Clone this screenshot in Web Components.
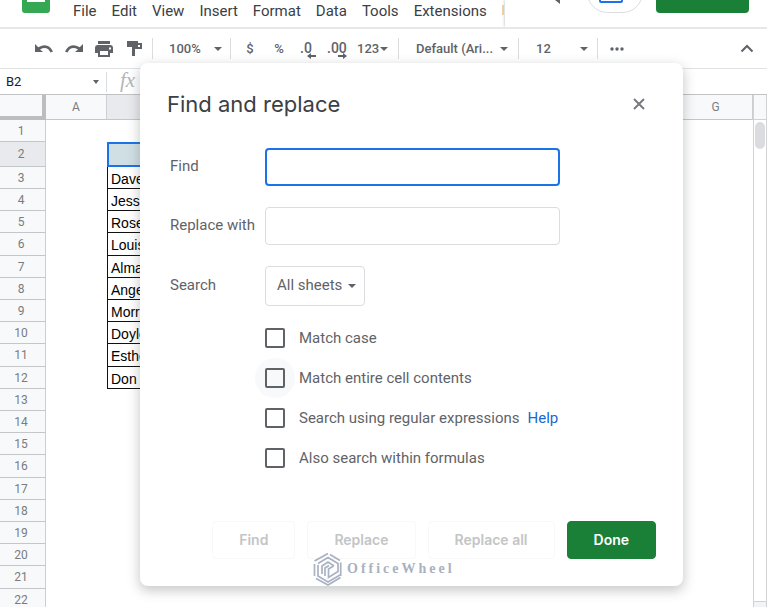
<!DOCTYPE html>
<html lang="en">
<head>
<meta charset="utf-8">
<title>Find and replace</title>
<style>
html,body{height:100%}
body{margin:0;background:#fff;color:#3c4043;font-family:Roboto,"Liberation Sans",sans-serif;font-size:15px;line-height:20px;overflow:hidden}
</style>
</head>
<body>
<sheet-app>
  <menu-bar slot="menu"></menu-bar>
  <tool-bar slot="tools"></tool-bar>
  <formula-bar slot="formula"></formula-bar>
  <sheet-grid slot="grid"></sheet-grid>
  <find-dialog slot="dialog" heading="Find and replace">
    <field-row label="Find" active></field-row>
    <field-row label="Replace with"></field-row>
    <search-scope label="Search">All sheets</search-scope>
    <check-option>Match case</check-option>
    <check-option hovered>Match entire cell contents</check-option>
    <check-option help>Search using regular expressions</check-option>
    <check-option>Also search within formulas</check-option>
    <dialog-button slot="actions" disabled>Find</dialog-button>
    <dialog-button slot="actions" disabled>Replace</dialog-button>
    <dialog-button slot="actions" disabled>Replace all</dialog-button>
    <dialog-button slot="actions" primary>Done</dialog-button>
    <brand-mark slot="mark">OfficeWheel</brand-mark>
  </find-dialog>
</sheet-app>
<script>
const define = (name, html, setup) => customElements.define(name, class extends HTMLElement {
  constructor() {
    super();
    this.attachShadow({ mode: "open" }).innerHTML = html;
  }
  connectedCallback() { if (setup) setup(this, this.shadowRoot); }
});

define("sheet-app", `
<style>
:host{display:flex;flex-direction:column;position:relative;height:100%;overflow:hidden}
.grid{flex:1;min-height:0;display:flex}
.grid ::slotted(*){flex:1}
.over{position:absolute;inset:0;padding:63px 84px 0 140px}
</style>
<slot name="menu"></slot><slot name="tools"></slot><slot name="formula"></slot>
<div class="grid"><slot name="grid"></slot></div>
<div class="over"><slot name="dialog"></slot></div>`);

define("menu-bar", `
<style>
:host{display:flex;height:27px;border-bottom:2px solid #e6e7e8;flex:none;overflow:hidden}
.logo{width:28px;margin-left:22px;flex:none}
nav{display:flex;gap:15px;padding:1px 0 0 23px;flex:1;overflow:hidden}
a{color:#3c4043;text-decoration:none;white-space:nowrap}
.edge{width:2px;height:10px;margin-top:4px;background:#f6d2a6}
.side{display:flex;align-items:flex-start;justify-content:flex-end;width:262px;flex:none;background:#fff;box-shadow:0 0 3px #b0b4b8}
button{font:inherit;padding:0;background:#fff;border:0;display:block}
.chat{width:12px;height:5px;margin-right:23px}
.meet{box-sizing:border-box;width:56px;height:13px;overflow:hidden;margin-right:13px}
.share{width:93px;height:13px;background:#1a8038;border-radius:0 0 4px 4px;margin-right:18px}
svg{display:block;margin:0 auto}
</style>
<svg class="logo" width="28" height="13"><path d="M0 0h28v10a3 3 0 0 1-3 3H3a3 3 0 0 1-3-3z" fill="#34a853"/><path d="M5 0h18v2H5z" fill="#fff"/></svg>
<nav><a href="#">File</a><a href="#">Edit</a><a href="#">View</a><a href="#">Insert</a><a href="#">Format</a><a href="#">Data</a><a href="#">Tools</a><a href="#">Extensions</a><span class="edge"></span></nav>
<div class="side">
<button class="chat" aria-label="Comments"><svg width="12" height="5"><path d="M3 0h5v4z" fill="#5f6368"/></svg></button>
<button class="meet" aria-label="Meet"><svg width="56" height="13"><rect x=".5" y="-27.500" width="55" height="40" rx="20" fill="none" stroke="#dadce0"/><path d="M13 0v1q0 1 1 1h20q1 0 1-1V0" fill="none" stroke="#1a73e8" stroke-width="2"/></svg></button>
<button class="share" aria-label="Share"></button>
</div>`);

define("tool-bar", `
<style>
:host{display:flex;align-items:center;height:39px;flex:none;border-bottom:1px solid #e0e2e4;background:#fff;color:#5f6368;font-size:13px;font-weight:500;padding:0 12px 0 29px}
button{font:inherit;color:inherit;background:none;border:0;padding:0;display:flex;align-items:center;justify-content:center;flex:none;height:26px;white-space:nowrap}
.ic{width:30px}
.hr{width:1px;height:21px;background:#dadce0;flex:none}
.ic + .hr{margin-left:3px}
.drop{justify-content:space-between}
.sp{flex:1}
</style>
<button class="ic" aria-label="Undo"><svg width="18" height="10" viewBox="0 0 18 10"><path d="M0 0v8h8L5 5.500Q12 1.500 15.500 8.500L18 7.500Q13-2.500 3.300 3.200z" fill="#5f6368"/></svg></button>
<button class="ic" aria-label="Redo"><svg width="18" height="10" viewBox="0 0 18 10"><path d="M18 0v8h-8l3-2.500Q6 1.500 2.500 8.500L0 7.500Q5-2.500 14.700 3.200z" fill="#5f6368"/></svg></button>
<button class="ic" aria-label="Print"><svg width="18" height="16" viewBox="0 0 18 16"><path d="M3 0h12v3H3zM3 4h12q3 0 3 3v5h-3v4H3v-4H0V7q0-3 3-3zm2 6v4h8v-4zm9-3.500v2h2v-2z" fill="#5f6368" fill-rule="evenodd"/></svg></button>
<button class="ic" aria-label="Paint format"><svg width="16" height="16" viewBox="0 0 16 16"><path d="M1 0h11v2h4v6H9v7H6V6h8V4h-2v2H1z" fill="#5f6368"/></svg></button>
<span class="hr"></span>
<button class="drop" style="width:53px;margin:0 8px 0 16px">100% <svg width="8" height="4"><path d="M0 0h8L4 4z" fill="#5f6368"/></svg></button>
<span class="hr"></span>
<button style="width:38px">$</button>
<button style="width:20px">%</button>
<button style="width:38px" aria-label="Decrease decimals"><svg width="18" height="20" viewBox="0 0 18 20"><text x="1" y="14" font-size="14" fill="#5f6368">.0</text><path d="M17 16v2h-5v2l-4-3 4-3v2z" fill="#5f6368"/></svg></button>
<button style="width:20px" aria-label="Increase decimals"><svg width="20" height="20" viewBox="0 0 20 20"><text x="0" y="14" font-size="14" fill="#5f6368">.00</text><path d="M11 16v2h5v2l4-3-4-3v2z" fill="#5f6368"/></svg></button>
<button class="drop" style="width:31px;margin:0 10px 0 10px">123<svg width="8" height="4"><path d="M0 0h8L4 4z" fill="#5f6368"/></svg></button>
<span class="hr"></span>
<button class="drop" style="width:92px;margin:0 10px 0 17px">Default (Ari...<svg width="8" height="4"><path d="M0 0h8L4 4z" fill="#5f6368"/></svg></button>
<span class="hr"></span>
<button class="drop" style="width:52px;margin:0 9px 0 17px">12<svg width="8" height="4"><path d="M0 0h8L4 4z" fill="#5f6368"/></svg></button>
<span class="hr"></span>
<button style="width:38px" aria-label="More"><svg width="14" height="4"><g fill="#5f6368"><circle cx="2" cy="2" r="1.700"/><circle cx="7" cy="2" r="1.700"/><circle cx="12" cy="2" r="1.700"/></g></svg></button>
<span class="sp"></span>
<button style="width:16px" aria-label="Hide menus"><svg width="14" height="9"><path d="M1.500 7.500 7 2l5.500 5.500" fill="none" stroke="#5f6368" stroke-width="2"/></svg></button>`);

define("formula-bar", `
<style>
:host{display:flex;align-items:center;height:25px;flex:none;font-size:13px;color:#202124}
button{font:inherit;color:inherit;background:none;border:0;padding:0 7px 0 6px;width:106px;height:24px;display:flex;align-items:center;justify-content:space-between}
.hr{width:1px;height:20px;background:#dadce0}
i{font:italic 21px/20px "Liberation Serif",serif;color:#b4b6b8;padding:0 0 4px 13px}
</style>
<button>B2<svg width="6" height="4"><path d="M0 0h6L3 4z" fill="#5f6368"/></svg></button><span class="hr"></span><i>fx</i>`);

define("sheet-grid", `
<style>
:host{display:flex;overflow:hidden;border-top:1px solid #c0c2c4;box-sizing:border-box}
.pane{flex:1;overflow:hidden}
table{border-collapse:separate;border-spacing:0;table-layout:fixed;width:100%}
th,td{padding:0;box-sizing:border-box;line-height:16px;overflow:hidden;white-space:nowrap}
th{font-size:12px;font-weight:400;color:#787c80;background:#f8f9fa;border-right:1px solid #cccfd2;border-bottom:1px solid #c4c7c9}
tbody th{padding-right:3px}
thead tr{height:25px}
thead th:first-child{border-right:4px solid #bcbdbe;border-bottom:4px solid #bcbdbe}
tbody tr{height:22px}
tbody tr:nth-child(5n+1){height:23px}
tbody tr:first-child{height:22px}
tbody tr:nth-child(2){height:25px}
.on,tbody th.on{background:#e8eaed}
td.name{font:14px/16px "Liberation Sans",Arial,sans-serif;color:#000;border:1px solid #111;border-top:0;padding:2px 0 0 3px}
td.cell{border:2px solid #1a73e8;background:#d0dfe3}
.bar{width:12px;flex:none;border-left:1px solid #d0d2d4;border-right:1px solid #d0d2d4;display:flex;flex-direction:column;align-items:center}
.cap{height:24px;align-self:stretch;background:#f8f9fa;border-bottom:1px solid #d0d2d4}
.thumb{width:10px;height:27px;border-radius:5px;background:#dadce0;margin-top:2px}
.end{margin-top:auto;height:5px;align-self:stretch;background:#f1f3f4;border-top:1px solid #d0d2d4}
</style>
<div class="pane"><table>
<colgroup><col style="width:46px"><col style="width:61px"><col style="width:140px"><col><col style="width:74px"></colgroup>
<thead><tr><th></th><th>A</th><th class="on"></th><th></th><th>G</th></tr></thead><tbody></tbody></table></div>
<div class="bar"><div class="cap"></div><div class="thumb"></div><div class="end"></div></div>`, (el, root) => {
  const names = ["Dave", "Jess", "Rose", "Louis", "Alma", "Ange", "Morr", "Doyle", "Esthe", "Don"];
  let rows = "";
  for (let n = 1; n <= 22; n++) {
    const name = names[n - 3];
    const kind = n === 2 ? "cell" : name ? "name" : "";
    rows += `<tr><th class="${n === 2 ? "on" : ""}">${n}</th><td></td><td class="${kind}">${name || ""}</td><td></td><td></td></tr>`;
  }
  root.querySelector("tbody").innerHTML = rows;
});

define("find-dialog", `
<style>
:host{display:block;position:relative;background:#fff;border-radius:8px;box-shadow:0 4px 12px 1px rgba(60,64,67,.28);box-sizing:border-box;padding:26px 27px 27px}
header{display:flex;justify-content:space-between;align-items:center;height:30px;margin-bottom:29px}
h1{font:400 22px/30px Inter,Lato,sans-serif;margin:0;color:#3c4043}
button{border:0;background:none;padding:0;width:34px;height:30px;display:flex;align-items:center;justify-content:center}
.actions{display:flex;justify-content:flex-end;gap:12px;margin-top:43px}
.mark{position:absolute;left:168px;bottom:0}
</style>
<header><h1></h1><button aria-label="Close"><svg width="12" height="12"><path d="m1 1 10 10M11 1 1 11" stroke="#777b7f" stroke-width="2"/></svg></button></header>
<slot></slot>
<div class="actions"><slot name="actions"></slot></div>
<div class="mark"><slot name="mark"></slot></div>`, (el, root) => {
  root.querySelector("h1").textContent = el.getAttribute("heading");
});

define("field-row", `
<style>
:host{display:flex;align-items:center;padding:0 96px 0 3px;margin-bottom:21px;color:#5f6368}
label{width:95px;flex:none;padding-bottom:2px}
input{flex:1;min-width:0;height:38px;box-sizing:border-box;border:1px solid #dadce0;border-radius:4px;padding:0 10px;font:inherit;color:#202124;outline:0;background:#fff}
:host([active]) input{border:2px solid #1a73e8}
</style><label for="f"></label><input id="f" type="text">`, (el, root) => {
  root.querySelector("label").textContent = el.getAttribute("label");
});

define("search-scope", `
<style>
:host{display:flex;align-items:center;padding:0 0 0 3px;margin-bottom:12px;color:#5f6368}
label{width:95px;flex:none;padding-bottom:2px}
.box{display:grid;width:100px;align-items:center}
select,svg{grid-area:1/1}
select{appearance:none;width:100%;height:40px;border:1px solid #dadce0;border-radius:4px;padding:0 20px 2px 11px;background:#fff;font:inherit;color:#5f6368}
svg{justify-self:end;margin-right:9px;pointer-events:none}
</style><label for="s"></label><div class="box"><select id="s"><option></option></select><svg width="8" height="4"><path d="M0 0h8L4 4z" fill="#5f6368"/></svg></div>`, (el, root) => {
  root.querySelector("label").textContent = el.getAttribute("label");
  root.querySelector("option").textContent = el.textContent;
});

define("check-option", `
<style>
:host{display:flex;align-items:center;height:40px;margin-left:88px;color:#5f6368}
.halo{width:40px;height:40px;border-radius:50%;display:grid;place-items:center;flex:none}
:host([hovered]) .halo{background:#f8f9fa}
input{appearance:none;margin:0;width:20px;height:20px;border:2px solid #5f6368;border-radius:2px}
label{margin-left:4px}
a{color:#1967d2;text-decoration:none;margin-left:8px}
</style><span class="halo"><input type="checkbox" id="c"></span><label for="c"><slot></slot></label><a href="#">Help</a>`, (el, root) => {
  if (!el.hasAttribute("help")) root.querySelector("a").remove();
});

define("dialog-button", `
<style>
:host{display:block}
button{height:38px;padding:0 26px;border:1px solid #f8f8f9;border-radius:4px;background:#fff;font:600 14px/20px Inter,Lato,sans-serif;color:#c3c5c6}
:host([primary]) button{background:#1a8038;border-color:#1a8038;color:#fff}
</style><button><slot></slot></button>`, (el, root) => {
  root.querySelector("button").disabled = el.hasAttribute("disabled");
});

define("brand-mark", `
<style>
:host{display:flex;align-items:center;gap:5px;padding-left:5px;color:#a9b1c2;font:700 14px/20px "Liberation Serif",serif;letter-spacing:3px}
</style>
<svg width="29" height="34" viewBox="0 0 29 34" fill="none" stroke-width="1.700" stroke="#a9b1c2"><path d="M15 1.500 1.500 9M1.500 12v12M17 2.500l10 6M27.700 10.500v13.500M5 13v11l10 6 12-7M3 26.500l12 6.500 12.500-7.500M5 11.500l10-6 10 6v8l-9.500 6V17l5-3M9 22v-8l6-4 6 4M12 24v-8l4-2.500"/></svg><slot></slot>`);
</script>
</body>
</html>
